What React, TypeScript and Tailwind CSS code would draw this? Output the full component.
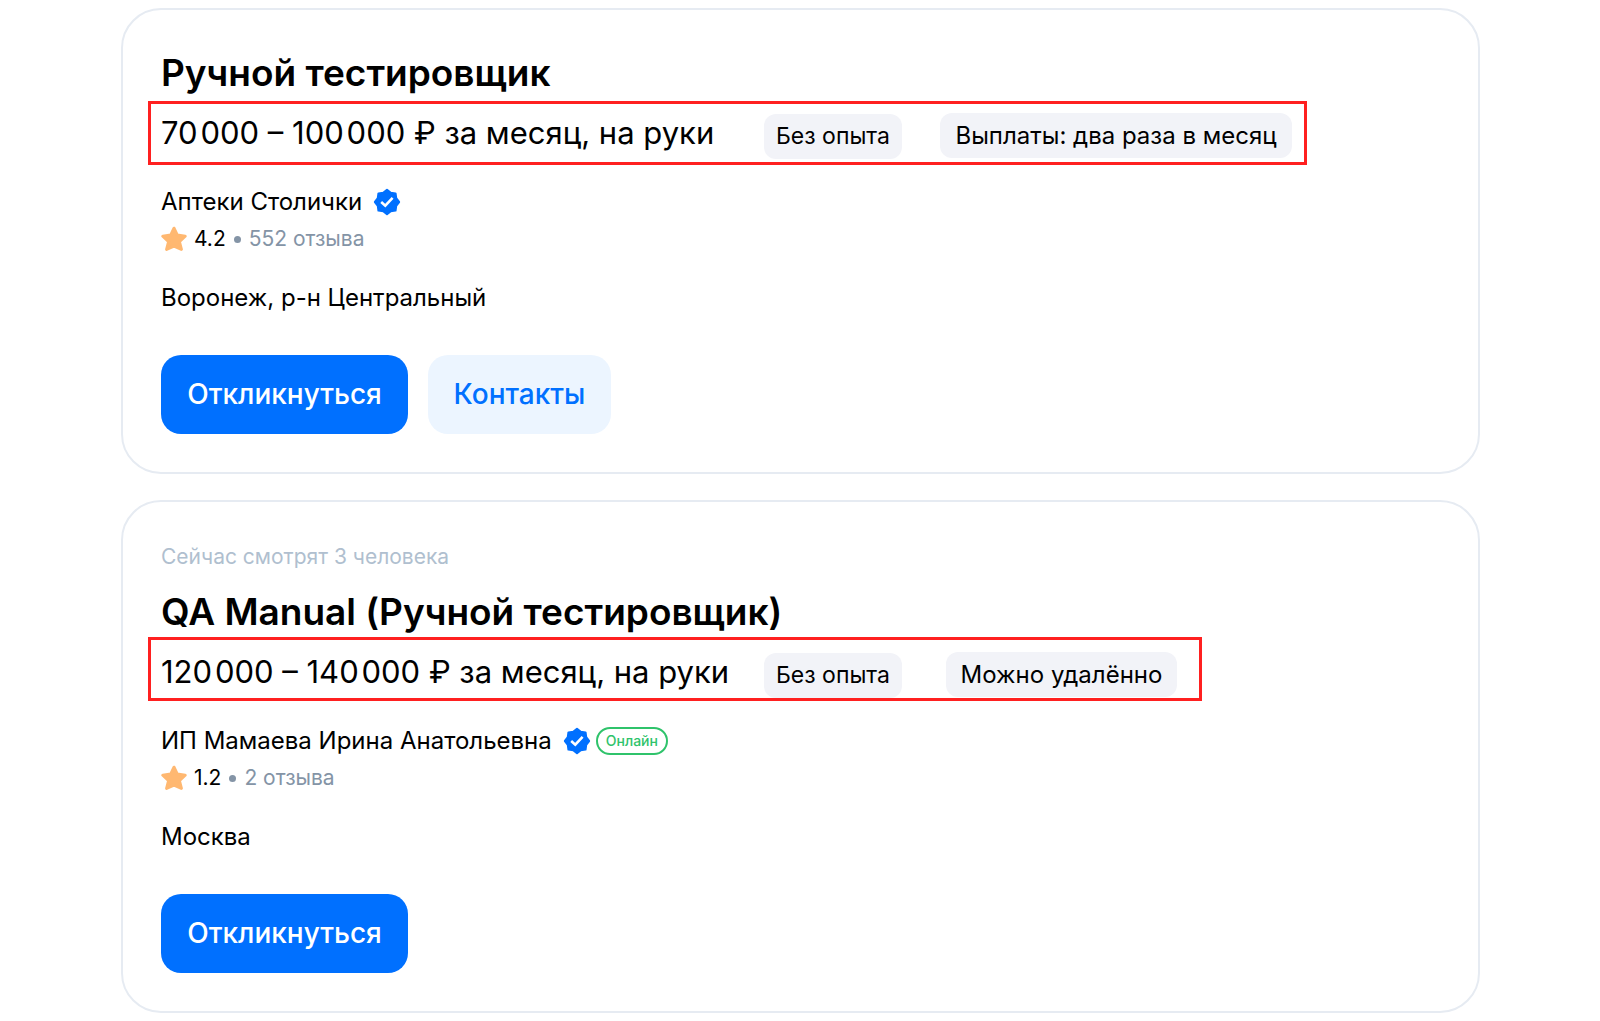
import React from 'react'

type Tag = { label: string; className: string }

type Vacancy = {
  id: number
  viewers?: string
  title: string
  salary: string
  tags: Tag[]
  frame: string
  company: string
  online: boolean
  rating: string
  reviews: string
  location: string
  contacts: boolean
}

const vacancies: Vacancy[] = [
  {
    id: 1,
    title: 'Ручной тестировщик',
    salary: '70\u200a000 – 100\u200a000 ₽ за месяц, на руки',
    tags: [
      { label: 'Без опыта', className: 'w-[138px] text-[23px]' },
      { label: 'Выплаты: два раза в месяц', className: 'w-[352px] ml-[38px] text-[24px]' }
    ],
    frame: 'top-0 -right-[15px]',
    company: 'Аптеки Столички',
    online: false,
    rating: '4.2',
    reviews: '552 отзыва',
    location: 'Воронеж, р-н Центральный',
    contacts: true
  },
  {
    id: 2,
    viewers: 'Сейчас смотрят 3 человека',
    title: 'QA Manual (Ручной тестировщик)',
    salary: '120\u200a000 – 140\u200a000 ₽ за месяц, на руки',
    tags: [
      { label: 'Без опыта', className: 'w-[138px] text-[23px]' },
      { label: 'Можно удалённо', className: 'w-[231px] ml-[44px] text-[24px]' }
    ],
    frame: '-top-[3px] -right-[25px]',
    company: 'ИП Мамаева Ирина Анатольевна',
    online: true,
    rating: '1.2',
    reviews: '2 отзыва',
    location: 'Москва',
    contacts: false
  }
]

const VerifiedIcon = () => (
  <svg width="28" height="28" viewBox="0 0 26 26" aria-label="Проверено" className="shrink-0">
    <path
      d="M13 1.8 L16.5 4.5 L20.9 5.1 L21.5 9.5 L24.2 13 L21.5 16.5 L20.9 20.9 L16.5 21.5 L13 24.2 L9.5 21.5 L5.1 20.9 L4.5 16.5 L1.8 13 L4.5 9.5 L5.1 5.1 L9.5 4.5 Z"
      fill="#0070ff"
      stroke="#0070ff"
      strokeWidth="2"
      strokeLinejoin="round"
    />
    <path d="M7.6 13 L11.4 16.4 L18.2 9.2" fill="none" stroke="#fff" strokeWidth="2.4" />
  </svg>
)

const StarIcon = () => (
  <svg width="26" height="26" viewBox="0 0 26 26" aria-hidden="true" className="shrink-0">
    <path
      d="M13 2.2 L16.2 8.9 L24.2 10.2 L18.4 15.6 L20.4 23.4 L13 20.2 L5.6 23.4 L7.6 15.6 L1.8 10.2 L9.8 8.9 Z"
      fill="#ffb871"
      stroke="#ffb871"
      strokeWidth="3"
      strokeLinejoin="round"
    />
  </svg>
)

const VacancyCard = ({ vacancy }: { vacancy: Vacancy }) => (
  <article className="rounded-[40px] border-2 border-[#e6ebf2] bg-white p-[38px]">
    {vacancy.viewers && (
      <p className="mb-[13px] text-[21px] leading-[34px] text-[#b0bfcf]">{vacancy.viewers}</p>
    )}
    <h2 className="text-[37px] leading-[50px] font-semibold">{vacancy.title}</h2>

    {/* Salary and tags */}
    <div className="relative mt-[3px] flex h-16 w-fit items-baseline">
      <p className="w-[603px] text-[31px] leading-[64px] whitespace-nowrap">{vacancy.salary}</p>
      {vacancy.tags.map((tag) => (
        <span
          key={tag.label}
          className={`${tag.className} rounded-xl bg-[#f2f3f8] text-center leading-[45px] whitespace-nowrap`}
        >
          {tag.label}
        </span>
      ))}
      <div className={`${vacancy.frame} pointer-events-none absolute -left-[13px] h-16 border-[3px] border-[#ff2020]`} />
    </div>

    {/* Company */}
    <div className="mt-[21px] flex h-8 items-center text-[24px] leading-8">
      <span className="mr-[11px]">{vacancy.company}</span>
      <VerifiedIcon />
      {vacancy.online && (
        <span className="ml-[5px] flex h-7 items-center rounded-full border-2 border-[#2fc36b] px-2 text-[14px] font-medium text-[#2fc36b]">
          Онлайн
        </span>
      )}
    </div>
    <div className="mt-[7px] flex h-7 items-center text-[21px] leading-7">
      <StarIcon />
      <span className="ml-[7px]">{vacancy.rating}</span>
      <span className="mx-2 size-[7px] rounded-full bg-[#8494a6]" />
      <span className="text-[#8494a6]">{vacancy.reviews}</span>
    </div>
    <p className="mt-[29px] text-[24px] leading-8">{vacancy.location}</p>

    {/* Actions */}
    <div className="mt-[41px] flex gap-5 text-[28px] font-medium">
      <button className="h-[79px] w-[247px] rounded-[20px] bg-[#0070ff] pb-[2px] text-white">Откликнуться</button>
      {vacancy.contacts && (
        <button className="h-[79px] w-[183px] rounded-[20px] bg-[#ecf5ff] pb-[2px] text-[#0070ff]">Контакты</button>
      )}
    </div>
  </article>
)

const App = () => {
  return (
    <main className="flex min-h-screen flex-col gap-[26px] bg-white py-2 pr-[120px] pl-[121px] font-['Inter','Liberation_Sans',sans-serif] text-black">
      {vacancies.map((vacancy) => (
        <VacancyCard key={vacancy.id} vacancy={vacancy} />
      ))}
    </main>
  )
}

export default App
